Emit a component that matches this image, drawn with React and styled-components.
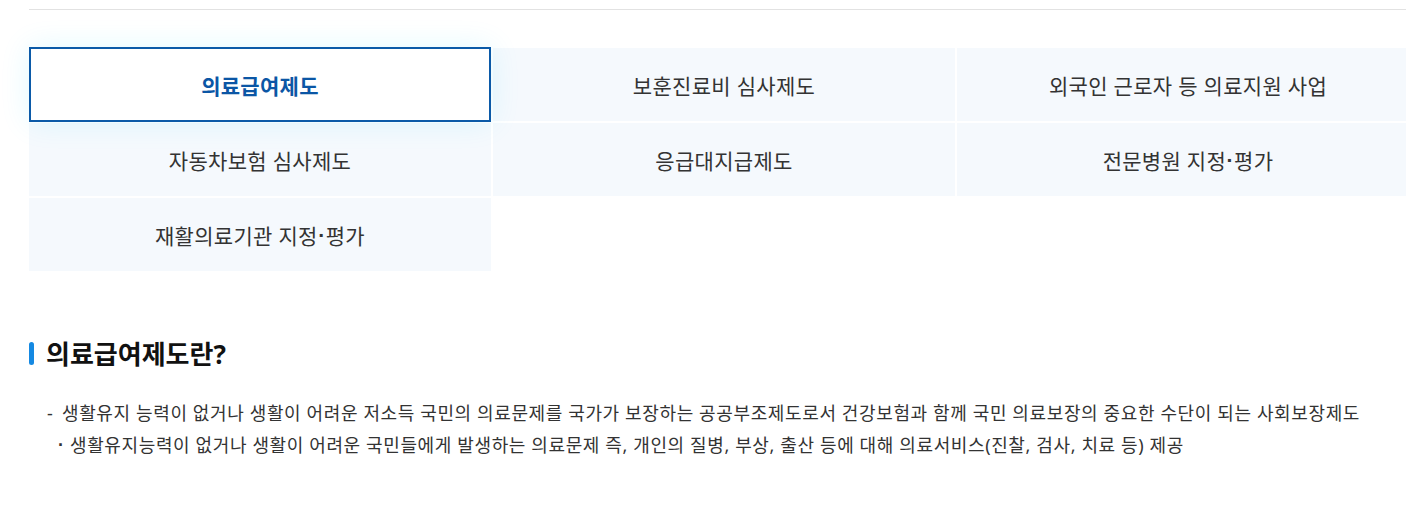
import React from "react";
import styled, { createGlobalStyle } from "styled-components";

const GlobalStyle = createGlobalStyle`
    html, body {
        margin: 0;
        padding: 0;
        background: #fff;
        overflow: hidden;
    }
    body {
        font-family: "Noto Sans", "Noto Sans CJK KR", sans-serif;
        color: #333;
    }
`;

const tabs = [
    "의료급여제도",
    "보훈진료비 심사제도",
    "외국인 근로자 등 의료지원 사업",
    "자동차보험 심사제도",
    "응급대지급제도",
    "전문병원 지정·평가",
    "재활의료기관 지정·평가",
];

// the middle dot renders full width in the CJK font, so give it a narrow one
function Label({ text }) {
    const parts = text.split("·");
    return parts.map((p, i) => (
        <React.Fragment key={i}>
            {i > 0 && <Dot>·</Dot>}
            {p}
        </React.Fragment>
    ));
}

export default function App() {
    return (
        <>
            <GlobalStyle />
            <Page>
                <TopLine />
                <TabGrid>
                    {tabs.map((t, i) => (
                        <Tab key={t} $active={i === 0}>
                            <Label text={t} />
                        </Tab>
                    ))}
                </TabGrid>

                <Section>
                    <Title>의료급여제도란?</Title>
                    <DashItem>
                        생활유지 능력이 없거나 생활이 어려운 저소득 국민의 의료문제를 국가가 보장하는 공공부조제도로서 건강보험과 함께 국민 의료보장의 중요한 수단이 되는 사회보장제도
                    </DashItem>
                    <DotItem>
                        생활유지능력이 없거나 생활이 어려운 국민들에게 발생하는 의료문제 즉, 개인의 질병, 부상, 출산 등에 대해 의료서비스(진찰, 검사, 치료 등) 제공
                    </DotItem>
                </Section>
            </Page>
        </>
    );
}

const Page = styled.div`
    width: 1390px;
    padding: 9px 0 0 29px;
`;

const TopLine = styled.div`
    height: 1px;
    background: #e2e2e2;
`;

const TabGrid = styled.ul`
    list-style: none;
    margin: 38px 0 0;
    padding: 0;
    display: grid;
    grid-template-columns: repeat(3, 1fr);
    grid-auto-rows: 73px;
    gap: 2px;
`;

const Tab = styled.li`
    display: flex;
    align-items: center;
    justify-content: center;
    font-size: 21px;
    letter-spacing: 0.3px;
    color: ${(p) => (p.$active ? "#0b56a5" : "#333")};
    font-weight: ${(p) => (p.$active ? 700 : 400)};
    background: ${(p) => (p.$active ? "#fff" : "#f5f9fd")};
    border: ${(p) => (p.$active ? "2px solid #0b5aa8" : "none")};
    box-shadow: ${(p) => (p.$active ? "0 0 30px rgba(0, 210, 255, 0.12)" : "none")};
    margin: ${(p) => (p.$active ? "-1px 0" : "0")};
    position: relative;
    z-index: ${(p) => (p.$active ? 1 : 0)};
    white-space: pre;
`;

const Dot = styled.span`
    font-family: "Liberation Sans", sans-serif;
    font-weight: 700;
    letter-spacing: 0;
    margin: 0 0.5px;
`;

const Section = styled.div`
    margin-top: 68px;
`;

const Title = styled.h3`
    position: relative;
    margin: 0 0 28px;
    padding-left: 17px;
    font-size: 26px;
    font-weight: 700;
    color: #111;
    line-height: 30px;

    &::before {
        content: "";
        position: absolute;
        left: 0;
        top: 3px;
        width: 5px;
        height: 23px;
        border-radius: 3px;
        background: #1589e2;
    }
`;

const DashItem = styled.p`
    position: relative;
    margin: 0;
    padding-left: 33px;
    font-size: 18px;
    line-height: 32px;
    letter-spacing: 0.62px;
    color: #333;

    &::before {
        content: "-";
        position: absolute;
        left: 18px;
    }
`;

const DotItem = styled.p`
    position: relative;
    margin: 0;
    padding-left: 41px;
    font-size: 18px;
    line-height: 32px;
    letter-spacing: 0.62px;
    color: #333;

    &::before {
        content: "·";
        position: absolute;
        left: 29px;
        font-family: "Liberation Sans", sans-serif;
        font-weight: 700;
    }
`;
